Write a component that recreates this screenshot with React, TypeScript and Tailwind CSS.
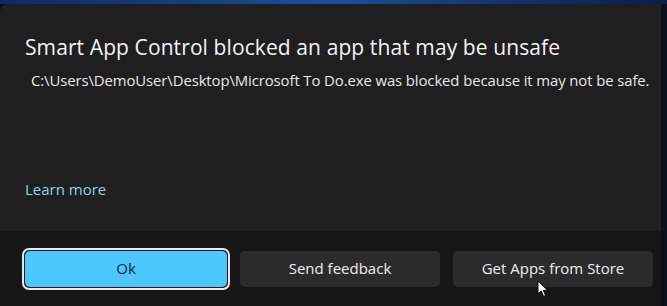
export default function App() {
  return (
    <div className="flex h-[306px] w-[667px] flex-col overflow-hidden bg-[#0b0f1a] font-['Open_Sans',sans-serif]">
      {/* desktop wallpaper peeking through above the dialog */}
      <div className="h-[4px] bg-gradient-to-r from-[#0d2a66] via-[#1a4f9a] to-[#0a1d4a]" />
      <div className="mr-[6px] flex flex-1 flex-col overflow-hidden rounded-tl-lg bg-[#1f1f1f]">
        <div className="flex flex-1 flex-col pl-[25px] pt-[29px]">
          <h1 className="text-[21px] leading-[28px] tracking-[0.1px] text-[#f3f3f3]">
            Smart App Control blocked an app that may be unsafe
          </h1>
          <p className="mt-[9px] whitespace-nowrap pl-[6px] text-[14.9px] leading-[20px] tracking-[-0.1px] text-[#e8e8e8]">
            C:\Users\DemoUser\Desktop\Microsoft To Do.exe was blocked because it may not be safe.
          </p>
          <a className="mt-[89px] text-[15px] leading-[20px] text-[#8fd4e4]">Learn more</a>
        </div>
        <div className="relative flex h-[75px] items-center bg-[#161616] pl-[22px]">
          <button className="h-[42px] w-[208px] shrink-0 rounded-[7px] border-2 border-[#e8e8e8] bg-[#1f1f1f] p-[1px]">
            <span className="flex h-full w-full items-center justify-center rounded-[5px] bg-[#4cc8ff] text-[15px] text-[#06263a]">
              Ok
            </span>
          </button>
          <button className="ml-[10px] h-[36px] w-[200px] shrink-0 rounded-[5px] bg-[#2b2b2b] text-[15px] text-[#efefef]">
            Send feedback
          </button>
          <button className="ml-[13px] h-[36px] w-[200px] shrink-0 rounded-[5px] bg-[#2b2b2b] text-[15px] text-[#efefef]">
            Get Apps from Store
          </button>
          <svg className="absolute left-[537px] top-[49px]" width="12" height="18" viewBox="0 0 12 18">
            <path d="M1 1 L1 14 L4.2 11 L6.6 16.5 L8.6 15.6 L6.3 10.3 L10.6 10.3 Z" fill="#ffffff" stroke="#000" strokeWidth="1" />
          </svg>
        </div>
      </div>
    </div>
  )
}
